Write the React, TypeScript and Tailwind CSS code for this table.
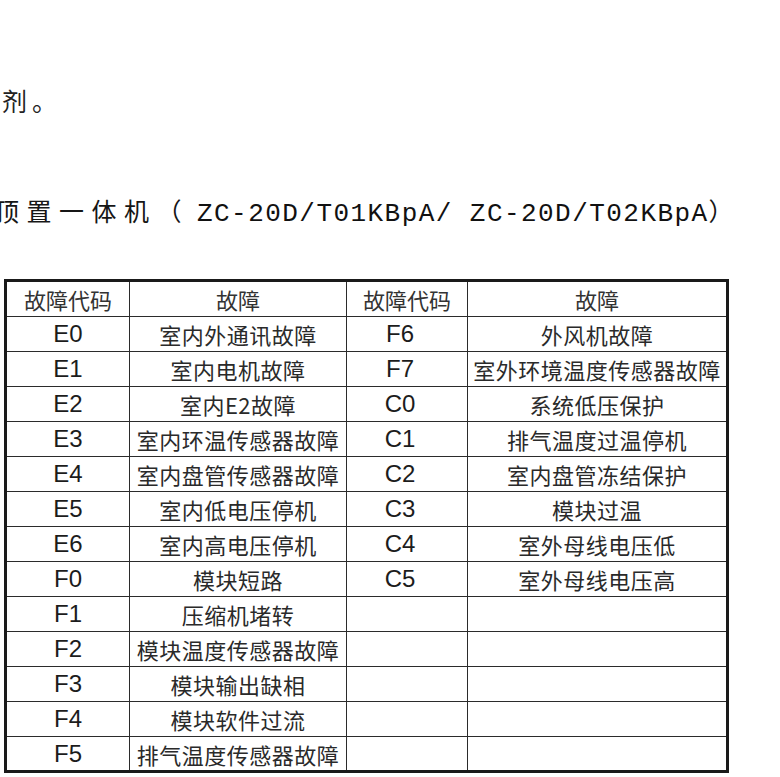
import React from "react";

const rows: [string, string, string, string][] = [
  ["E0", "室内外通讯故障", "F6", "外风机故障"],
  ["E1", "室内电机故障", "F7", "室外环境温度传感器故障"],
  ["E2", "室内E2故障", "C0", "系统低压保护"],
  ["E3", "室内环温传感器故障", "C1", "排气温度过温停机"],
  ["E4", "室内盘管传感器故障", "C2", "室内盘管冻结保护"],
  ["E5", "室内低电压停机", "C3", "模块过温"],
  ["E6", "室内高电压停机", "C4", "室外母线电压低"],
  ["F0", "模块短路", "C5", "室外母线电压高"],
  ["F1", "压缩机堵转", "", ""],
  ["F2", "模块温度传感器故障", "", ""],
  ["F3", "模块输出缺相", "", ""],
  ["F4", "模块软件过流", "", ""],
  ["F5", "排气温度传感器故障", "", ""],
];

const cjk = "font-['Noto_Sans_CJK_SC',sans-serif]";
const code = "font-['Liberation_Sans','Noto_Sans_CJK_SC',sans-serif]";
const cell = "border-[1.5px] border-[#2b2b2b] p-0 text-center align-middle";

const App = () => {
  return (
    <div className="w-[780px] h-[777px] bg-white overflow-hidden text-[#1c1c1c]">
      <p
        className={`${cjk} mt-[80px] ml-[2px] h-[40px] leading-[40px] text-[25px] tracking-[5px] text-[#222]`}
      >
        剂。
      </p>

      {/* first glyph is cut by the left edge in the source scan */}
      <p
        className={`${cjk} mt-[70px] ml-[-6px] h-[40px] leading-[40px] text-[25px] tracking-[7.5px] whitespace-nowrap text-[#161616]`}
      >
        顶置一体机（
        <span className="ml-[8px] font-['Liberation_Mono',monospace] text-[26px] tracking-[1.45px] text-[#111]">
          ZC-20D/T01KBpA/ ZC-20D/T02KBpA
        </span>
        ）
      </p>

      <table className="mt-[49px] ml-[4px] border-collapse border-[3px] border-[#1a1a1a] table-fixed">
        <colgroup>
          <col className="w-[124px]" />
          <col className="w-[217px]" />
          <col className="w-[121px]" />
          <col className="w-[260px]" />
        </colgroup>
        <thead>
          <tr className="h-[36px]">
            <th className={`${cell} ${cjk} font-normal text-[22px] text-[#333]`}>故障代码</th>
            <th className={`${cell} ${cjk} font-normal text-[22px] text-[#333]`}>故障</th>
            <th className={`${cell} ${cjk} font-normal text-[22px] text-[#333]`}>故障代码</th>
            <th className={`${cell} ${cjk} font-normal text-[22px] text-[#333]`}>故障</th>
          </tr>
        </thead>
        <tbody>
          {rows.map(([c1, d1, c2, d2]) => (
            <tr key={c1} className="h-[35px]">
              <td className={`${cell} ${code} text-[24px] leading-none`}>{c1}</td>
              <td className={`${cell} ${cjk} text-[22px] leading-none whitespace-nowrap tracking-[0.5px] text-[#2a2a2a]`}>
                {d1}
              </td>
              <td className={`${cell} ${code} text-[24px] leading-none pr-[14px]`}>{c2}</td>
              <td className={`${cell} ${cjk} text-[22px] leading-none whitespace-nowrap tracking-[0.5px] text-[#2a2a2a]`}>
                {d2}
              </td>
            </tr>
          ))}
        </tbody>
      </table>
    </div>
  );
};

export default App;
